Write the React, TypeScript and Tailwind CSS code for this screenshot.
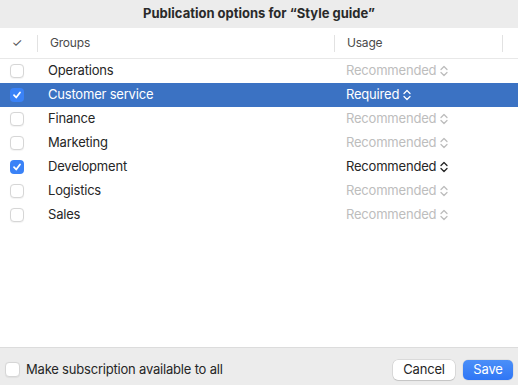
import React from "react";

const rows = [
  { name: "Operations", usage: "Recommended", checked: false, selected: false },
  { name: "Customer service", usage: "Required", checked: true, selected: true },
  { name: "Finance", usage: "Recommended", checked: false, selected: false },
  { name: "Marketing", usage: "Recommended", checked: false, selected: false },
  { name: "Development", usage: "Recommended", checked: true, selected: false },
  { name: "Logistics", usage: "Recommended", checked: false, selected: false },
  { name: "Sales", usage: "Recommended", checked: false, selected: false },
];

function UpDown({ color }: { color: string }) {
  return (
    <svg width="8" height="12" viewBox="0 0 8 12" className="ml-[4px]" fill="none">
      <path d="M1 4.5 L4 1.5 L7 4.5" stroke={color} strokeWidth="1.3" strokeLinecap="round" strokeLinejoin="round" />
      <path d="M1 7.5 L4 10.5 L7 7.5" stroke={color} strokeWidth="1.3" strokeLinecap="round" strokeLinejoin="round" />
    </svg>
  );
}

function Check({ checked, size = 14 }: { checked: boolean; size?: number }) {
  if (checked) {
    return (
      <div
        className="flex items-center justify-center rounded-[4px] bg-[#3a82f7]"
        style={{ width: size, height: size }}
      >
        <svg width="10" height="10" viewBox="0 0 10 10" fill="none">
          <path d="M2 5.2 L4.2 7.5 L8 2.5" stroke="white" strokeWidth="1.8" strokeLinecap="round" strokeLinejoin="round" />
        </svg>
      </div>
    );
  }
  return (
    <div
      className="rounded-[4px] border border-[#d6d6d6] bg-white shadow-[0_0.5px_1px_rgba(0,0,0,0.05)]"
      style={{ width: size, height: size }}
    />
  );
}

export default function App() {
  return (
    <div
      className="flex h-[385px] w-[518px] flex-col overflow-hidden bg-white text-[13px] tracking-[-0.2px] text-[#262626]"
      style={{ fontFamily: "Inter, 'Noto Sans', sans-serif" }}
    >
      <div className="flex h-[28px] items-center justify-center bg-[#ececec] text-[13px] font-bold tracking-normal text-[#2a2a2a]">
        Publication options for “Style guide”
      </div>
      <div className="flex h-[31px] items-center border-b border-[#e8e8e8] bg-white text-[12px] text-[#4a4a4a]">
        <div className="flex w-[37px] items-center justify-center pr-[3px] text-[12px] text-[#555]">✓</div>
        <div className="h-[17px] w-px bg-[#e2e2e2]" />
        <div className="w-[296px] pl-[12px]">Groups</div>
        <div className="h-[17px] w-px bg-[#e2e2e2]" />
        <div className="w-[167px] pl-[12px]">Usage</div>
        <div className="h-[17px] w-px bg-[#e2e2e2]" />
      </div>
      <div className="flex-1 bg-white">
        {rows.map((r) => (
          <div
            key={r.name}
            className={`flex h-[24px] items-center ${r.selected ? "bg-[#3b72c3] text-white" : ""}`}
          >
            <div className="flex w-[48px] items-center pl-[10px]">
              <Check checked={r.checked} />
            </div>
            <div className="w-[298px]">{r.name}</div>
            <div
              className={`flex items-center ${
                r.selected ? "text-white" : r.checked ? "text-[#262626]" : "text-[#bdbdbd]"
              }`}
            >
              {r.usage}
              <UpDown color={r.selected ? "#ffffff" : r.checked ? "#262626" : "#bdbdbd"} />
            </div>
          </div>
        ))}
      </div>
      <div className="flex h-[38px] items-center border-t border-[#dcdcdc] bg-[#ececec] pl-[5px] pr-[5px] pt-[6px]">
        <div className="flex items-center">
          <Check checked={false} size={15} />
          <span className="ml-[6px] text-[#262626]">Make subscription available to all</span>
        </div>
        <div className="ml-auto flex items-center gap-[8px]">
          <button className="h-[20px] w-[62px] rounded-[5px] bg-white text-[13px] text-[#262626] shadow-[0_0_0_0.5px_rgba(0,0,0,0.15),0_1px_1px_rgba(0,0,0,0.1)]">
            Cancel
          </button>
          <button className="h-[20px] w-[50px] rounded-[5px] bg-gradient-to-b from-[#4b8ff8] to-[#2f76f5] text-[13px] text-white shadow-[0_0_0_0.5px_rgba(0,0,0,0.1)]">
            Save
          </button>
        </div>
      </div>
    </div>
  );
}
